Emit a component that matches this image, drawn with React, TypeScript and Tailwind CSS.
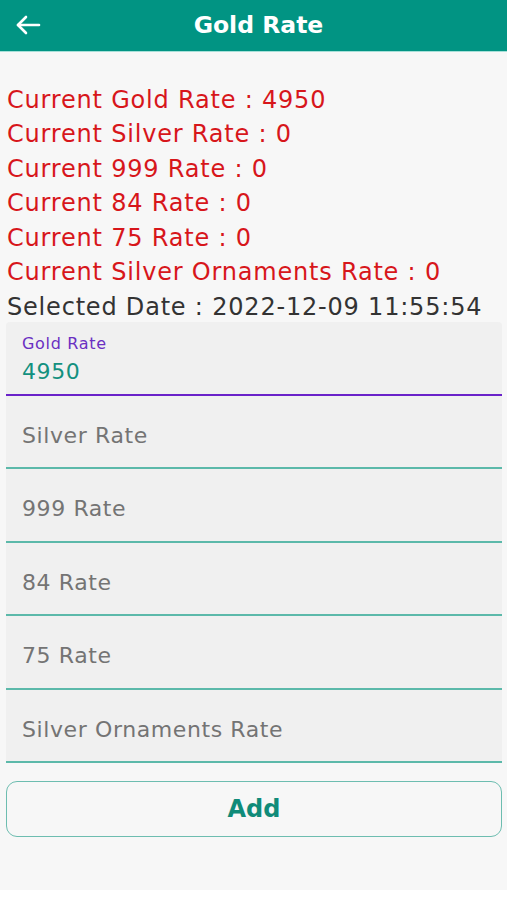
const CURRENT_RATES = [
  "Current Gold Rate : 4950",
  "Current Silver Rate : 0",
  "Current 999 Rate : 0",
  "Current 84 Rate : 0",
  "Current 75 Rate : 0",
  "Current Silver Ornaments Rate : 0",
];

const FIELDS = ["Silver Rate", "999 Rate", "84 Rate", "75 Rate", "Silver Ornaments Rate"];

function BackArrow() {
  return (
    <svg width="26" height="22" viewBox="0 0 26 22" fill="none" stroke="currentColor" strokeWidth="2.6" strokeLinecap="round" strokeLinejoin="round">
      <path d="M24 11H3" />
      <path d="M11 3 3 11l8 8" />
    </svg>
  );
}

export default function App() {
  return (
    <div className="w-[507px] h-[900px] bg-white font-['DejaVu_Sans',sans-serif]">
      <div className="h-[890px] bg-[#f7f7f7] flex flex-col">
        {/* Toolbar */}
        <header className="h-[52px] bg-[#019483] border-b border-[#a6e0d8] flex items-center relative shrink-0">
          <button className="absolute left-[15px] top-[14px] text-white" aria-label="Back">
            <BackArrow />
          </button>
          <h1 className="w-full text-center text-white text-[23.5px] font-bold pl-[10px]">
            Gold Rate
          </h1>
        </header>

        {/* Current rates */}
        <div className="px-[7px] pt-[30.5px] flex flex-col tracking-[0.8px]">
          {CURRENT_RATES.map((line) => (
            <p key={line} className="text-[24px] leading-[34.5px] text-[#d7161b] whitespace-nowrap">
              {line}
            </p>
          ))}
          <p className="text-[24px] leading-[34.5px] -mb-[2px] text-[#333333] whitespace-nowrap">
            Selected Date : 2022-12-09 11:55:54
          </p>
        </div>

        {/* Inputs */}
        <div className="pl-[6px] pr-[5px] flex flex-col tracking-[0.6px]">
          <div className="h-[73.5px] bg-[#f0f0f0] rounded-t-[4px] border-b-2 border-[#6a22c9] px-[16px] pt-[12px]">
            <div className="text-[16px] leading-[20px] text-[#6a2fc2] tracking-[0.7px]">Gold Rate</div>
            <div className="text-[22px] leading-[36px] text-[#13907f]">4950</div>
          </div>
          {FIELDS.map((label) => (
            <div
              key={label}
              className="h-[73.5px] bg-[#f0f0f0] border-b-2 border-[#5cb9aa] px-[16px] pt-[8px] flex items-center"
            >
              <span className="text-[22px] text-[#747474] whitespace-nowrap">{label}</span>
            </div>
          ))}
        </div>

        {/* Add button */}
        <div className="pl-[6px] pr-[5px] pt-[17.5px]">
          <button className="w-full h-[56px] rounded-[11px] border-[1.5px] border-[#6dbdb0] text-[#108b79] text-[24px] font-bold">
            Add
          </button>
        </div>
      </div>
    </div>
  );
}
